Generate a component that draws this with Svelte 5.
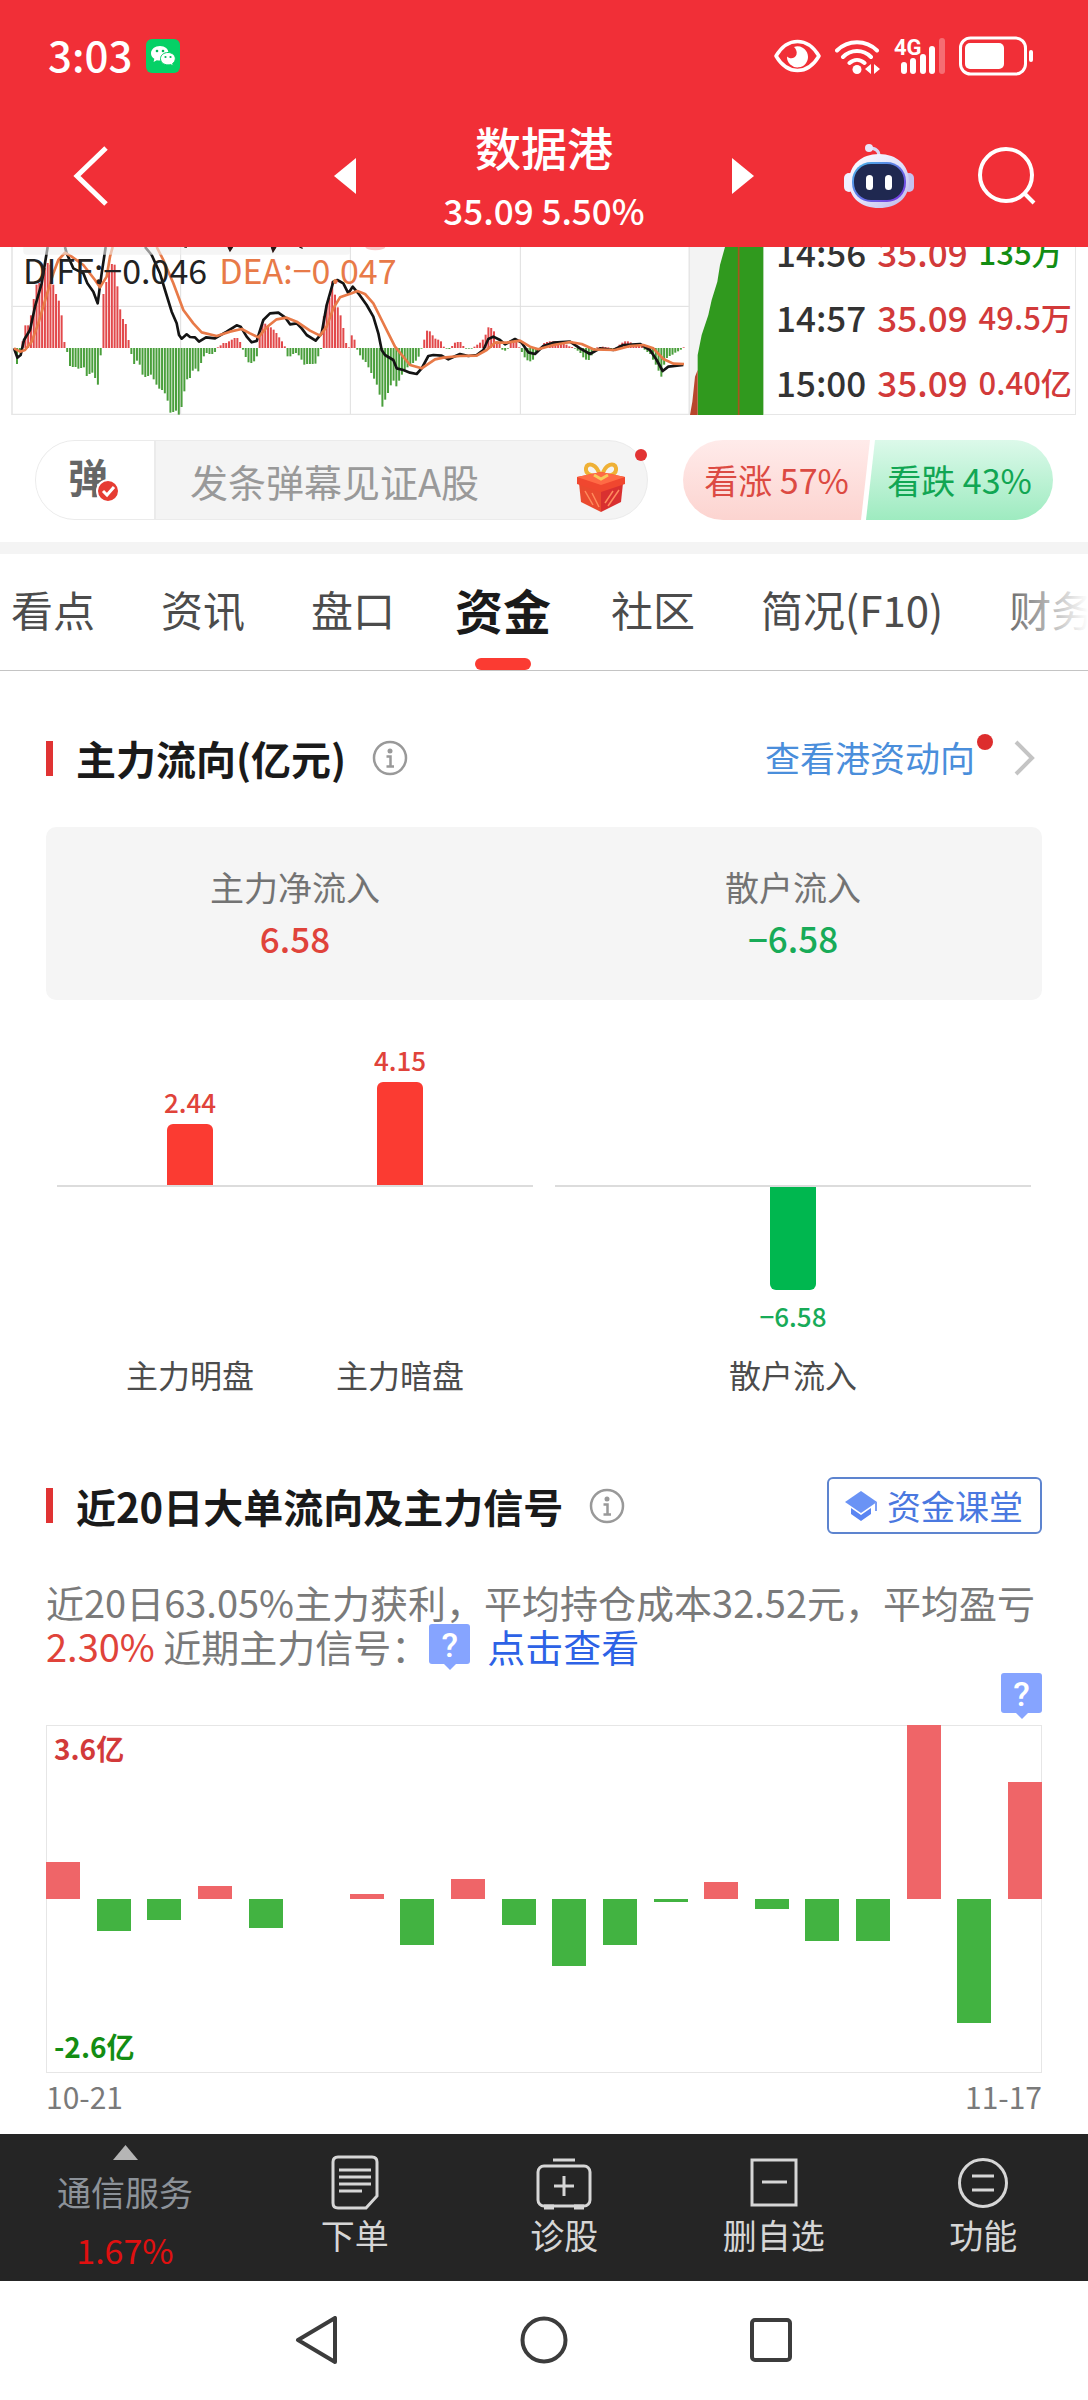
<script>
  const trades = [
    { time: '14:56', price: '35.09', volume: '135万', side: 'down' },
    { time: '14:57', price: '35.09', volume: '49.5万', side: 'up' },
    { time: '15:00', price: '35.09', volume: '0.40亿', side: 'up' }
  ];

  const tabs = ['看点', '资讯', '盘口', '资金', '社区', '简况(F10)', '财务'];
  let active = $state('资金');
  let message = $state('');

  // MACD histogram: positive values rise above the zero line.
  const macd = [
    -48, -10, 20, 68, 68, 98, 147, 190, 195, 215, 240, 255, 250, 190, 162, 142, 98, 18,
    -12, -54, -57, -57, -62, -60, -58, -84, -78, -74, -90, -110, -22,
    162, 198, 230, 252, 250, 185, 116, 87, 72, 24,
    -18, -48, -38, -50, -80, -87, -84, -80, -94, -110, -122, -126, -136, -158, -194, -192, -188,
    -200, -177, -130, -94, -90, -68, -62, -70, -45, -25, -15, -18, -18, -12,
    2, 8, 15, 15, 20, 25, 30, 30, 18, -5, -27, -43, -45, -40, -25,
    40, 72, 73, 68, 62, 55, 45, 32, 20, 5, -25, -25, -18, -15, -22, -35, -50, -48, -48, -48, -47, -25, -3,
    95, 130, 150, 200, 160, 122, 98, 60, 15, 2, 38, 25,
    -5, -22, -35, -42, -58, -75, -92, -110, -140, -176, -155, -135, -112, -98, -115, -98, -80, -65,
    -58, -50, -45, -38, -26, -2, 25, 52, 50, 38, 28, 25, 20, 4, -2, -3, 6, 16, 18, 18, 6, -2, -2, -2,
    4, 10, 16, 25, 40, 62, 60, 50, 20, 18, -5, -8, -2, 15, 18, 18, 2, -12, -28, -37, -40, -35, -15, -4,
    4, 15, 18, 20, 20, 20, 18, 15, 12, 10, 5, 3, -2, -8, -15, -28, -35, -36, -22, -8, 2, 3, 4, 3, 2,
    -4, -5, 3, 10, 16, 20, 20, 17, 12, 10, 8, 5, -5, -12, -18, -35, -50, -68, -86, -50, -30, -24,
    -20, -14, -10, -5, 2
  ];
  const step = 2000 / (macd.length - 1);

  const diff =
    'M42,325 L52,353 62,345 72,300 90,270 105,200 125,130 143,21 M195,21 L200,40 220,85 250,100 262,130 280,155 293,190 305,100 317,21 M435,21 L455,45 480,100 495,150 515,215 530,250 537,285 545,296 560,283 570,291 585,292 597,305 618,292 645,295 680,275 710,256 722,260 740,290 755,307 770,303 790,240 810,220 835,218 855,232 870,253 890,250 905,265 920,285 947,302 965,280 980,195 1000,125 1012,120 1030,130 1045,160 1058,140 1075,160 1100,195 1120,230 1135,280 1145,330 1155,345 1180,360 1190,385 1210,390 1230,398 1250,402 1265,385 1285,348 1300,345 1325,347 1345,358 1380,342 1405,348 1430,345 1450,330 1465,297 1480,290 1500,300 1515,313 1545,297 1565,308 1585,337 1605,342 1630,318 1660,308 1710,305 1740,325 1770,342 1800,325 1840,330 1870,315 1920,312 1950,330 1970,360 1988,393 2005,380 2050,375';
  const dea =
    'M42,325 L60,335 75,330 95,305 115,250 140,165 160,100 175,60 195,38 215,50 250,75 285,120 300,142 320,110 330,50 338,21 M470,21 L490,60 520,130 550,210 580,250 605,277 650,288 690,275 725,267 750,280 775,292 800,262 830,238 860,233 890,245 930,272 960,287 980,260 1000,205 1020,172 1055,160 1072,153 1095,162 1120,190 1145,240 1165,280 1185,320 1230,375 1265,385 1305,358 1330,353 1380,348 1430,347 1460,330 1485,308 1520,308 1560,302 1590,320 1615,328 1660,315 1710,306 1745,312 1780,328 1845,330 1890,318 1930,315 1960,325 1990,357 2020,371 2052,372';

  const groups = [
    [
      { name: '主力明盘', text: '2.44', px: 61, up: true },
      { name: '主力暗盘', text: '4.15', px: 103, up: true }
    ],
    [{ name: '散户流入', text: '−6.58', px: 103, up: false }]
  ];

  // Daily net flow of large orders, in 亿.
  const peak = 3.6;
  const daily = [
    0.77, -0.66, -0.44, 0.27, -0.6, 0, 0.1, -0.95, 0.41, -0.54,
    -1.38, -0.95, -0.06, 0.35, -0.21, -0.86, -0.86, 3.6, -2.56, 2.42
  ];
</script>

{#snippet info()}
  <button class="info" aria-label="说明">
    <svg width="36" height="36" viewBox="0 0 36 36" fill="none">
      <circle cx="18" cy="18" r="16" stroke="#999" stroke-width="2.500" />
      <circle cx="18" cy="11" r="2.500" fill="#999" />
      <path d="M14.500 16.500h4v9.500M14.500 26.500h7.500" stroke="#999" stroke-width="2.500" />
    </svg>
  </button>
{/snippet}

<div class="page">
  <header>
    <div class="status">
      <div class="clock">
        <span>3:03</span>
        <svg width="34" height="34" viewBox="0 0 34 34">
          <rect width="34" height="34" rx="6" fill="#05d166" />
          <path d="M14 7c-5 0-9 3.200-9 7.200 0 2.400 1.300 4.300 3.300 5.600L7.600 23l3.200-1.800c1 .3 2.100.4 3.200.4 5 0 8.500-3.300 8.500-7.400S19 7 14 7z" fill="#fff" />
          <path d="M22 13.500c-4.300 0-7.500 2.700-7.500 6.200s3.200 6.200 7.500 6.200c.9 0 1.800-.1 2.600-.4l2.600 1.500-.5-2.700c1.600-1.100 2.600-2.700 2.600-4.600 0-3.500-3-6.200-7.300-6.200z" fill="#fff" stroke="#05d166" />
          <g fill="#05b95a"><circle cx="11" cy="12" r="1.300" /><circle cx="17" cy="12" r="1.300" /><circle cx="19.500" cy="18" r="1.100" /><circle cx="24.500" cy="18" r="1.100" /></g>
        </svg>
      </div>
      <div class="signals">
        <svg width="47" height="36" viewBox="0 0 47 36">
          <path d="M2 18C8 8 15 3.500 23.500 3.500S39 8 45 18C39 28 32 32.500 23.500 32.500S8 28 2 18z" fill="none" stroke="#fff" stroke-width="3.500" stroke-linejoin="round" />
          <path d="M20 9a10.500 10.500 0 1 1-7 9.500c3 3 8.500 2 9.500-2 .8-3-.5-5.500-2.500-7.500z" fill="#fff" />
        </svg>
        <svg width="45" height="36" viewBox="0 0 45 36" fill="none" stroke="#fff" stroke-width="4" stroke-linecap="round">
          <path d="M2 12.500C13 1.500 31 1.500 42 12.500M8 19c8-8 20-8 28 0M14.500 25c4.500-4 10.500-4 15 0" />
          <circle cx="22" cy="31.500" r="4.500" fill="#fff" stroke="none" />
          <path d="M30 31l6-5v10zM45 31l-6-5v10z" fill="#fff" stroke="none" />
        </svg>
        <svg class="cell" width="51" height="38" viewBox="0 0 51 38">
          <text x="0" y="18" class="net">4G</text>
          <g fill="#fff"><rect x="7" y="25" width="6" height="12" rx="3" /><rect x="16" y="21" width="6" height="16" rx="3" /><rect x="26" y="17" width="6" height="20" rx="3" /><rect x="35" y="9" width="6" height="28" rx="3" /><rect x="45" y="1" width="6" height="36" rx="3" opacity=".3" /></g>
        </svg>
        <svg width="75" height="40" viewBox="0 0 75 40">
          <rect x="1.500" y="2" width="65" height="36" rx="10" fill="none" stroke="#fff" stroke-width="3" />
          <rect x="6" y="7" width="39" height="26" rx="5" fill="#fff" />
          <rect x="70" y="14" width="4" height="12" rx="2" fill="#fff" />
        </svg>
      </div>
    </div>
    <div class="titlebar">
      <button class="back" aria-label="返回">
        <svg width="36" height="62" viewBox="0 0 36 62"><path d="M34 3L5 31l29 28" fill="none" stroke="#fff" stroke-width="5" /></svg>
      </button>
      <div class="stock">
        <button aria-label="上一只"><svg width="22" height="36" viewBox="0 0 22 36"><path d="M22 0v36L0 18z" fill="#fff" /></svg></button>
        <div class="names">
          <h1>数据港</h1>
          <p>35.09 5.50%</p>
        </div>
        <button aria-label="下一只"><svg width="22" height="36" viewBox="0 0 22 36"><path d="M0 0v36l22-18z" fill="#fff" /></svg></button>
      </div>
      <div class="actions">
        <button aria-label="智能助手">
          <svg width="70" height="64" viewBox="0 0 70 64">
            <defs>
              <linearGradient id="shell" x1="0" y1="0" x2="1" y2="1"><stop offset="0" stop-color="#fff" /><stop offset=".5" stop-color="#e4e4fb" /><stop offset="1" stop-color="#b9b6ea" /></linearGradient>
              <linearGradient id="visor" x1="0" y1="0" x2="1" y2="1"><stop offset="0" stop-color="#47b9e8" /><stop offset="1" stop-color="#7a2fe0" /></linearGradient>
            </defs>
            <path d="M25 4c6 0 10 2 10 8" fill="none" stroke="#d9d6f3" stroke-width="3" />
            <circle cx="25" cy="4" r="4" fill="#e9e6fa" />
            <rect x="0" y="29" width="10" height="19" rx="5" fill="#f0f0ff" />
            <rect x="60" y="29" width="10" height="19" rx="5" fill="#c5c1ef" />
            <path d="M35 10c18 0 30 11 30 28 0 16-12 26-30 26S5 54 5 38c0-17 12-28 30-28z" fill="url(#shell)" />
            <rect x="8" y="18" width="54" height="40" rx="19" fill="url(#visor)" />
            <rect x="10" y="20" width="50" height="36" rx="17" fill="#1f2850" />
            <rect x="22" y="31" width="7" height="15" rx="3.500" fill="#fff" />
            <rect x="41" y="31" width="7" height="15" rx="3.500" fill="#fff" />
          </svg>
        </button>
        <button aria-label="搜索">
          <svg width="58" height="58" viewBox="0 0 58 58" fill="none" stroke="#fff" stroke-width="4"><circle cx="28" cy="28" r="26" /><path d="M46 46l10 10" /></svg>
        </button>
      </div>
    </div>
  </header>

  <section class="market">
    <div class="macd">
      <svg viewBox="33 21 2037 504" preserveAspectRatio="none">
        <g fill="none" stroke="#dedede" stroke-width="3">
          <path d="M33 199H2070M542 21V525M1051 21V525M1561 21V525" />
          <path d="M36 21V524H2070M2068 21V525" stroke="#e6e6e6" stroke-width="5" />
        </g>
        {#each macd as v, i}
          <rect x={48 + i * step} y={v > 0 ? 324 - v : 324} width="6" height={Math.abs(v)} fill={v > 0 ? '#e2494b' : '#4a9f3c'} />
        {/each}
        <path d={diff} fill="none" stroke="#141414" stroke-width="8" stroke-linejoin="round" />
        <path d={dea} fill="none" stroke="#e87a48" stroke-width="8" stroke-linejoin="round" />
        <path d="M70 21H1050V35Q1050 44 1040 44H80Q70 44 70 35z" fill="#eeeeee" opacity=".6" />
        <path d="M553 21h8M684 21l6 12 8-12M814 21l5 14 9-14M898 21l10 4" stroke="#2a1513" stroke-width="4" fill="#2a1513" />
        <path d="M1096 21a30 10 0 0 0 60 0z" fill="#f8c9c9" />
      </svg>
      <div class="legend"><span>DIFF:−0.046</span><span class="dea">DEA:−0.047</span></div>
    </div>
    <svg class="depth" viewBox="930 21 222 504" preserveAspectRatio="none">
      <rect x="930" y="21" width="222" height="504" fill="#f3f3f3" />
      <path d="M1035 21L1020 75 1012 125 995 180 985 225 965 285 953 345V525H1150V21z" fill="#30991e" />
      <path d="M953 390L945 410 937 485 930 525H953z" fill="#b8452c" />
      <path d="M1076 21V525" stroke="#a8541f" stroke-width="5" />
    </svg>
    <table class="trades">
      <tbody>
        {#each trades as t}
          <tr><td>{t.time}</td><td class="up">{t.price}</td><td class="vol {t.side}">{t.volume}</td></tr>
        {/each}
      </tbody>
    </table>
  </section>

  <section class="talk">
    <div class="composer">
      <button class="toggle" aria-label="弹幕开关">
        <span>弹</span>
        <svg width="24" height="24" viewBox="0 0 24 24"><circle cx="12" cy="12" r="11" fill="#e63c33" stroke="#fff" stroke-width="2" /><path d="M7 12l4 4 7-8" fill="none" stroke="#fff" stroke-width="3" /></svg>
      </button>
      <input type="text" placeholder="发条弹幕见证A股" aria-label="发条弹幕" bind:value={message} />
      <button class="gift" aria-label="礼物">
        <svg width="48" height="52" viewBox="0 0 48 52">
          <path d="M23 15C15 16 8 13 9 7s11-5 14 8zM25 15c8 1 15-2 14-8s-11-5-14 8z" fill="none" stroke="#efb136" stroke-width="4" />
          <path d="M2 22l22 8v21L4 41z" fill="#ea4a2f" /><path d="M46 22l-22 8v21l20-10z" fill="#d93030" />
          <path d="M0 16l24-5 24 5v7l-24 8L0 23z" fill="#f0472f" /><path d="M0 16l24-5 24 5-24 8z" fill="#ff6a45" />
          <path d="M8 30l8 14M15 32l7 14M42 29l-11 16M36 30l-8 12" stroke="#ff8a5c" stroke-width="1.500" />
          <path d="M17 14l7 4 7-4" fill="none" stroke="#f7c95a" stroke-width="3" />
        </svg>
      </button>
      <i class="dot"></i>
    </div>
    <div class="vote">
      <button class="bull">看涨 57%</button>
      <button class="bear">看跌 43%</button>
    </div>
  </section>

  <nav class="tabs">
    {#each tabs as tab}
      <button class:active={tab === active} onclick={() => (active = tab)}>{tab}</button>
    {/each}
  </nav>

  <main>
    <div class="heading first">
      <h2>主力流向(亿元)</h2>
      {@render info()}
      <a class="more" href="#hk">
        <span>查看港资动向<i class="dot"></i></span>
        <svg width="22" height="38" viewBox="0 0 22 38"><path d="M3 3l16 16L3 35" fill="none" stroke="#c4c4c4" stroke-width="4" /></svg>
      </a>
    </div>

    <dl class="card">
      <div><dt>主力净流入</dt><dd class="red">6.58</dd></div>
      <div><dt>散户流入</dt><dd class="green">−6.58</dd></div>
    </dl>

    <div class="flow">
      {#each groups as group}
        <div class="group">
          {#each group as b}
            <div class="col">
              <div class="above">
                {#if b.up}<b class="red">{b.text}</b><span class="bar rise" style:height="{b.px}px"></span>{/if}
              </div>
              <div class="below">
                {#if !b.up}<span class="bar fall" style:height="{b.px}px"></span><b class="green">{b.text}</b>{/if}
              </div>
              <span class="name">{b.name}</span>
            </div>
          {/each}
        </div>
      {/each}
    </div>

    <div class="heading">
      <h2>近20日大单流向及主力信号</h2>
      {@render info()}
      <a class="course" href="#course">
        <svg width="32" height="30" viewBox="0 0 32 30"><path d="M16 0l16 11-16 11L0 11z" fill="#6a93f5" /><path d="M6 17l10 7 10-7v6l-10 7-10-7z" fill="#5a85f2" /><path d="M31 11v9" stroke="#7d9ff6" stroke-width="2" /></svg>
        资金课堂
      </a>
    </div>

    <p class="summary">近20日63.05%主力获利，平均持仓成本32.52元，平均盈亏<br /><em>2.30%</em> 近期主力信号：<span class="badge">?</span><a href="#signal">点击查看</a></p>

    <div class="marker"><span class="badge">?</span></div>
    <div class="daily">
      {#each daily as v}
        <div class="day">
          <div class="half top">{#if v > 0}<i style:height="{(v / peak) * 100}%"></i>{/if}</div>
          <div class="half">{#if v < 0}<i style:height="{(-v / peak) * 100}%"></i>{/if}</div>
        </div>
      {/each}
      <b class="max">3.6亿</b>
      <b class="min">-2.6亿</b>
    </div>
    <div class="dates"><span>10-21</span><span>11-17</span></div>
  </main>

  <footer>
    <button class="sector">
      <svg width="25" height="15" viewBox="0 0 25 15"><path d="M12.500 0L25 15H0z" fill="#b5b5b5" /></svg>
      <span>通信服务</span>
      <span class="pct">1.67%</span>
    </button>
    <button class="tool">
      <svg width="48" height="56" viewBox="0 0 48 56" fill="none" stroke="#d6d6d6" stroke-width="3"><path d="M7 3h34q5 0 5 5v34L35 54H7q-5 0-5-5V8q0-5 5-5zM8 16h32M8 23h32M8 30h32M8 37h23" /></svg>
      下单
    </button>
    <button class="tool">
      <svg width="56" height="56" viewBox="0 0 56 56" fill="none" stroke="#d6d6d6" stroke-width="3"><rect x="2" y="12" width="52" height="40" rx="6" /><path d="M17 6h22M28 22v20M18 32h20" /><path d="M8 53h10M38 53h10" stroke-width="5" /></svg>
      诊股
    </button>
    <button class="tool">
      <svg width="48" height="56" viewBox="0 0 48 56" fill="none" stroke="#d6d6d6" stroke-width="3"><rect x="2" y="6" width="44" height="45" /><path d="M12 28h25" /></svg>
      删自选
    </button>
    <button class="tool">
      <svg width="50" height="56" viewBox="0 0 50 56" fill="none" stroke="#d6d6d6" stroke-width="3"><circle cx="25" cy="29" r="23.500" /><path d="M14 22h22M14 36h22" /></svg>
      功能
    </button>
  </footer>

  <nav class="system">
    <button aria-label="返回"><svg width="48" height="48" viewBox="0 0 48 48" fill="none" stroke="#3c3c3c" stroke-width="4" stroke-linejoin="round"><path d="M42 2v44L5 24z" /></svg></button>
    <button aria-label="主页"><svg width="48" height="48" viewBox="0 0 48 48" fill="none" stroke="#3c3c3c" stroke-width="4"><circle cx="24" cy="24" r="21.500" /></svg></button>
    <button aria-label="最近任务"><svg width="48" height="48" viewBox="0 0 48 48" fill="none" stroke="#3c3c3c" stroke-width="4"><rect x="5" y="4" width="38" height="40" rx="3" /></svg></button>
  </nav>
</div>

<style>
  :global(body) { margin: 0; background: #fff; }
  .page { font-family: 'Noto Sans CJK SC', sans-serif; color: #1a1a1a; overflow: hidden; }
  h1, h2, p, dl, dd { margin: 0; font-weight: inherit; }
  button { border: 0; padding: 0; background: none; font: inherit; color: inherit; cursor: pointer; }
  a { text-decoration: none; }
  svg { display: block; flex: none; }
  .red { color: #e0433a; }
  .green { color: #18ab58; }

  header { background: #f12f37; color: #fff; }
  .status { height: 112px; display: flex; justify-content: space-between; align-items: center; padding: 0 54px 0 48px; }
  .clock { display: flex; align-items: center; gap: 14px; font-size: 42px; line-height: 60px; font-weight: 500; }
  .clock span { padding-bottom: 4px; }
  .signals { display: flex; align-items: center; gap: 14px; }
  .cell { overflow: visible; }
  .net { font-family: 'Roboto', sans-serif; font-size: 22px; font-weight: 700; fill: #fff; }
  .titlebar { display: grid; grid-template-columns: 1fr 420px 1fr; align-items: center; height: 128px; padding-bottom: 7px; }
  .back { justify-self: start; margin-left: 72px; }
  .stock { display: flex; justify-content: space-between; align-items: center; }
  .names { text-align: center; font-weight: 500; }
  .names h1 { font-size: 46px; line-height: 68px; }
  .names p { font-size: 35px; line-height: 60px; }
  .actions { display: flex; justify-content: flex-end; align-items: center; gap: 64px; padding-right: 52px; }

  .market { display: flex; height: 168px; padding: 0 12px 0 11px; overflow: hidden; }
  .macd { flex: 1; position: relative; }
  .macd svg { width: 100%; height: 168px; }
  .legend { position: absolute; left: 12px; top: 0; display: flex; gap: 12px; font-size: 34px; line-height: 46px; color: #222; }
  .dea { color: #e87a48; }
  .depth { width: 74px; height: 168px; }
  .trades { width: 312px; box-sizing: border-box; border-collapse: collapse; align-self: flex-end; border-right: 1px solid #e6e6e6; border-bottom: 1px solid #e6e6e6; font-size: 35px; font-weight: 500; color: #333; }
  .trades td { height: 65px; line-height: 62px; padding: 0 0 0 8px; white-space: nowrap; }
  .trades td:first-child { padding-left: 12px; }
  .trades .up { color: #d23a3a; }
  .trades .down { color: #138d13; }
  .trades .vol { font-size: 31px; }

  .talk { display: flex; gap: 35px; padding: 25px 35px 22px; border-bottom: 12px solid #f4f4f4; }
  .composer { flex: 1; min-width: 0; height: 80px; box-sizing: border-box; position: relative; display: flex; align-items: center; border: 1px solid #ebebeb; border-radius: 40px; background: #f4f4f4; }
  .toggle { position: relative; flex: none; width: 120px; height: 78px; box-sizing: border-box; border-right: 2px solid #ebebeb; border-radius: 40px 0 0 40px; background: #fff; font-size: 40px; line-height: 70px; font-weight: 700; color: #666; padding-bottom: 8px; }
  .toggle span { padding-right: 14px; }
  .toggle svg { position: absolute; left: 60px; top: 38px; }
  .composer input { flex: 1; min-width: 0; border: 0; background: none; padding: 0 0 0 34px; font: inherit; font-size: 38px; color: #333; outline: 0; }
  .composer input::placeholder { color: #999; opacity: 1; }
  .gift { margin-right: 22px; padding-top: 14px; }
  .composer .dot { position: absolute; right: 0; top: 8px; width: 12px; height: 12px; border-radius: 50%; background: #e23333; }
  .vote { display: flex; flex: none; width: 370px; border-radius: 40px; overflow: hidden; font-size: 34px; line-height: 80px; }
  .vote button { flex: 1; height: 80px; }
  .bull { color: #dc4a42; background: linear-gradient(#ffebea, #fcd4d0); clip-path: polygon(0 0, 100% 0, calc(100% - 9px) 100%, 0 100%); }
  .vote .bear { margin-left: -4px; color: #11a653; background: linear-gradient(#dcf9ea, #9eebc0); clip-path: polygon(9px 0, 100% 0, 100% 100%, 0 100%); }

  .tabs { position: relative; display: flex; gap: 66px; height: 116px; padding-left: 11px; border-bottom: 1px solid #c4c4c4; overflow: hidden; }
  .tabs button { position: relative; flex: none; height: 116px; padding-bottom: 6px; font-size: 42px; line-height: 110px; color: #4c4c4c; white-space: nowrap; }
  .tabs .active { margin: 0 -6px; font-size: 48px; font-weight: 700; color: #1a1a1a; }
  .tabs .active::after { content: ''; position: absolute; left: 20px; right: 20px; bottom: 0; height: 12px; border-radius: 6px; background: #fb3b32; }
  .tabs::after { content: ''; position: absolute; right: 0; top: 0; width: 96px; height: 114px; background: linear-gradient(90deg, #fff0, #fff); pointer-events: none; }

  main { padding: 0 46px; }
  .heading { display: flex; align-items: center; height: 57px; }
  .heading.first { height: 138px; padding-top: 18px; }
  .heading h2 { display: flex; align-items: center; font-size: 40px; line-height: 56px; font-weight: 700; }
  .heading h2::before { content: ''; width: 7px; height: 35px; margin-right: 23px; background: #e03333; }
  .info { margin-left: 26px; }
  .more { margin-left: auto; display: flex; align-items: center; gap: 38px; padding-right: 7px; font-size: 35px; line-height: 52px; color: #4a8edb; }
  .more span { position: relative; padding-bottom: 2px; }
  .more .dot { position: absolute; right: -18px; top: 3px; width: 16px; height: 16px; border-radius: 50%; background: #dd2d2d; }
  .card { display: flex; padding: 33px 0 38px; border-radius: 10px; background: #f5f5f5; text-align: center; }
  .card div { flex: 1; }
  .card dt { font-size: 34px; line-height: 54px; color: #737373; }
  .card dd { font-size: 35px; line-height: 48px; font-weight: 500; }

  .flow { display: flex; gap: 22px; padding: 0 11px; margin-bottom: 77px; }
  .group { flex: 1; display: flex; justify-content: center; background: linear-gradient(#dcdcdc, #dcdcdc) 0 185px / 100% 2px no-repeat; }
  .col { width: 210px; display: flex; flex-direction: column; align-items: center; }
  .above { height: 185px; display: flex; flex-direction: column; justify-content: flex-end; align-items: center; }
  .below { height: 161px; padding-top: 2px; display: flex; flex-direction: column; align-items: center; }
  .flow b { font-size: 26px; line-height: 44px; font-weight: 500; }
  .bar { width: 46px; }
  .rise { background: #fb3b32; border-radius: 6px 6px 0 0; }
  .fall { background: #00b74f; border-radius: 0 0 6px 6px; margin-bottom: 4px; }
  .name { font-size: 32px; line-height: 52px; color: #4c4c4c; }

  .course { margin-left: auto; display: flex; align-items: center; gap: 10px; height: 57px; box-sizing: border-box; padding: 0 17px 0 16px; border: 2px solid #5d84cf; border-radius: 6px; font-size: 34px; line-height: 50px; color: #4a78e0; }
  .summary { margin-top: 46px; font-size: 38px; line-height: 44px; color: #7a7a7a; white-space: nowrap; }
  .summary em { font-style: normal; color: #e0433a; }
  .summary a { color: #2d62e6; }
  .summary .badge { margin-right: 17px; }
  .badge { position: relative; display: inline-block; vertical-align: top; width: 41px; height: 40px; border-radius: 3px; background: #86a4ff; color: #fff; font-family: 'Roboto', sans-serif; font-size: 34px; font-weight: 500; line-height: 42px; text-align: center; }
  .badge::after { content: ''; position: absolute; left: 15px; top: 40px; border: 6px solid transparent; border-top-color: #86a4ff; border-bottom: 0; }
  .marker { display: flex; justify-content: flex-end; height: 45px; margin: 5px 0 7px; }
  .daily { position: relative; display: flex; justify-content: space-between; height: 348px; box-shadow: inset 0 0 0 1px #e6e6e6; }
  .day { width: 34px; }
  .half { height: 174px; display: flex; align-items: flex-start; }
  .half.top { align-items: flex-end; }
  .half i { width: 100%; background: #42b341; }
  .half.top i { background: #ef6568; }
  .daily b { position: absolute; left: 8px; font-size: 28px; line-height: 40px; font-weight: 700; }
  .max { top: 3px; color: #d23a3a; }
  .min { bottom: 7px; color: #138d13; }
  .dates { display: flex; justify-content: space-between; margin-bottom: 15px; font-size: 30px; line-height: 46px; color: #7a7a7a; }

  footer { display: grid; grid-template-columns: 250px repeat(4, 1fr); height: 147px; background: #252525; color: #d6d6d6; font-size: 34px; }
  footer button { display: flex; flex-direction: column; align-items: center; }
  .sector { padding-top: 11px; font-size: 34px; line-height: 58px; color: #8c9299; }
  .sector svg { margin-bottom: 3px; }
  .sector .pct { color: #e01010; }
  .tool { padding-top: 20px; line-height: 50px; }
  .system { display: grid; grid-template-columns: repeat(3, 227px); justify-content: center; height: 117px; }
  .system button { display: grid; place-items: center; }
</style>
